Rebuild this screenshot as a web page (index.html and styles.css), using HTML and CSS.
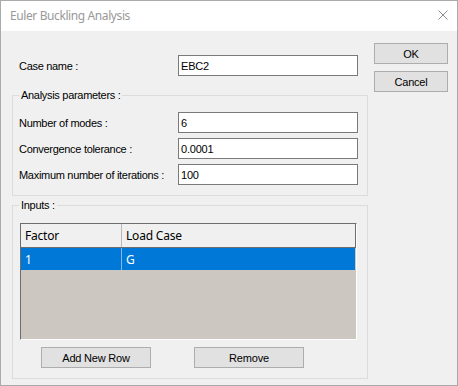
FILE: index.html
```html
<!DOCTYPE html>
<html>
<head>
<meta charset="utf-8">
<link rel="stylesheet" href="styles.css">
</head>
<body>
<div class="window">
  <div class="titlebar">
    <span class="title">Euler Buckling Analysis</span>
    <svg class="close" width="10" height="10" viewBox="0 0 10 10"><path d="M0.5 0.5L9.5 9.5M9.5 0.5L0.5 9.5" stroke="#8c8c8c" stroke-width="1" fill="none"/></svg>
  </div>
  <div class="content">
    <div class="main">
      <div class="case">
        <label class="lbl">Case name :</label>
        <input class="field" value="EBC2">
      </div>
      <fieldset class="group params">
        <legend class="legend">Analysis parameters :</legend>
        <div class="fields">
          <label class="lbl">Number of modes :</label>
          <input class="field" value="6">
          <label class="lbl">Convergence tolerance :</label>
          <input class="field" value="0.0001">
          <label class="lbl">Maximum number of iterations :</label>
          <input class="field" value="100">
        </div>
      </fieldset>
      <fieldset class="group inputs">
        <legend class="legend">Inputs :</legend>
        <div class="inputs-body">
          <div class="grid">
            <div class="grid-head">
              <div class="cell c1">Factor</div>
              <div class="cell c2">Load Case</div>
            </div>
            <div class="grid-row sel">
              <div class="cell c1">1</div>
              <div class="cell c2">G</div>
            </div>
          </div>
          <div class="actions">
            <button class="btn wide">Add New Row</button>
            <button class="btn wide">Remove</button>
          </div>
        </div>
      </fieldset>
    </div>
    <div class="side">
      <button class="btn">OK</button>
      <button class="btn">Cancel</button>
    </div>
  </div>
</div>
</body>
</html>
```
FILE: styles.css
```css
html, body {
  margin: 0;
  padding: 0;
  background: #f0f0f0;
}

.window {
  width: 458px;
  height: 386px;
  box-sizing: border-box;
  border: 1px solid #aaaaaa;
  background: #f0f0f0;
  display: flex;
  flex-direction: column;
  font-family: "Liberation Sans", Arial, sans-serif;
  font-size: 11px;
  color: #000;
}

.titlebar {
  height: 30px;
  flex: none;
  background: #fff;
  display: flex;
  align-items: center;
  padding-left: 9px;
  padding-right: 9px;
}

.title {
  flex: 1;
  font-family: "Noto Sans", sans-serif;
  font-size: 12px;
  letter-spacing: -0.4px;
  color: #999999;
  line-height: 30px;
}

.close {
  display: block;
  align-self: flex-start;
  margin-top: 9px;
}

.content {
  flex: 1;
  display: flex;
  gap: 6px;
  padding: 0 9px 6px 11px;
}

.main {
  width: 356px;
  padding-top: 24px;
  display: flex;
  flex-direction: column;
}

.lbl {
  white-space: nowrap;
  letter-spacing: -0.3px;
}

.field {
  box-sizing: border-box;
  width: 180px;
  height: 21px;
  margin: 0;
  border: 1px solid #7a7a7a;
  padding: 0 2px;
  background: #fff;
  font-family: "Liberation Sans", Arial, sans-serif;
  font-size: 11px;
  letter-spacing: -0.2px;
  color: #000;
  outline: none;
}

.case {
  display: grid;
  grid-template-columns: 159px 180px;
  align-items: center;
  padding-left: 7px;
  height: 21px;
}

.group {
  margin: 0;
  padding: 0;
  min-width: 0;
  border: 1px solid #dcdcdc;
}

.legend {
  margin-left: 6px;
  padding: 0 2px;
  line-height: 15px;
  font-size: 11px;
  letter-spacing: -0.3px;
}

.params {
  margin-top: 12px;
}

.fields {
  display: grid;
  grid-template-columns: 159px 180px;
  grid-auto-rows: 21px;
  row-gap: 5px;
  align-items: center;
  padding: 9px 9px 10px 6px;
}

.inputs {
  margin-top: 2px;
}

.inputs-body {
  padding: 10px 10px 10px 7px;
}

.grid {
  box-sizing: border-box;
  width: 337px;
  height: 117px;
  border: 1px solid;
  border-color: #6d6d6d #ffffff #ffffff #6d6d6d;
  background: #ccc8c1;
  display: flex;
  flex-direction: column;
  font-family: "Noto Sans", sans-serif;
  font-size: 12px;
  letter-spacing: -0.2px;
}

.grid-head {
  height: 24px;
  box-sizing: border-box;
  display: flex;
  background: #f0f0f0;
  border-bottom: 1px solid #6d6d6d;
  border-right: 1px solid #6d6d6d;
}

.grid-row {
  height: 22px;
  display: flex;
  margin-right: 1px;
}

.sel {
  background: #0078d7;
  color: #fff;
}

.cell {
  display: flex;
  align-items: center;
  padding-left: 4px;
  white-space: nowrap;
}

.c1 {
  width: 96px;
  border-right: 1px solid #b9b9b9;
}

.sel .c1 {
  border-right-color: #7fb8e9;
}

.c2 {
  flex: 1;
  padding-left: 4px;
}

.actions {
  display: flex;
  gap: 43px;
  margin-top: 7px;
  padding-left: 21px;
}

.btn {
  box-sizing: border-box;
  width: 74px;
  height: 21px;
  margin: 0;
  padding: 0;
  border: 1px solid #adadad;
  background: #e1e1e1;
  font-family: "Liberation Sans", Arial, sans-serif;
  font-size: 11px;
  letter-spacing: -0.2px;
  color: #000;
}

.btn.wide {
  width: 110px;
}

.side {
  width: 74px;
  padding-top: 12px;
  display: flex;
  flex-direction: column;
  gap: 7px;
}
```
